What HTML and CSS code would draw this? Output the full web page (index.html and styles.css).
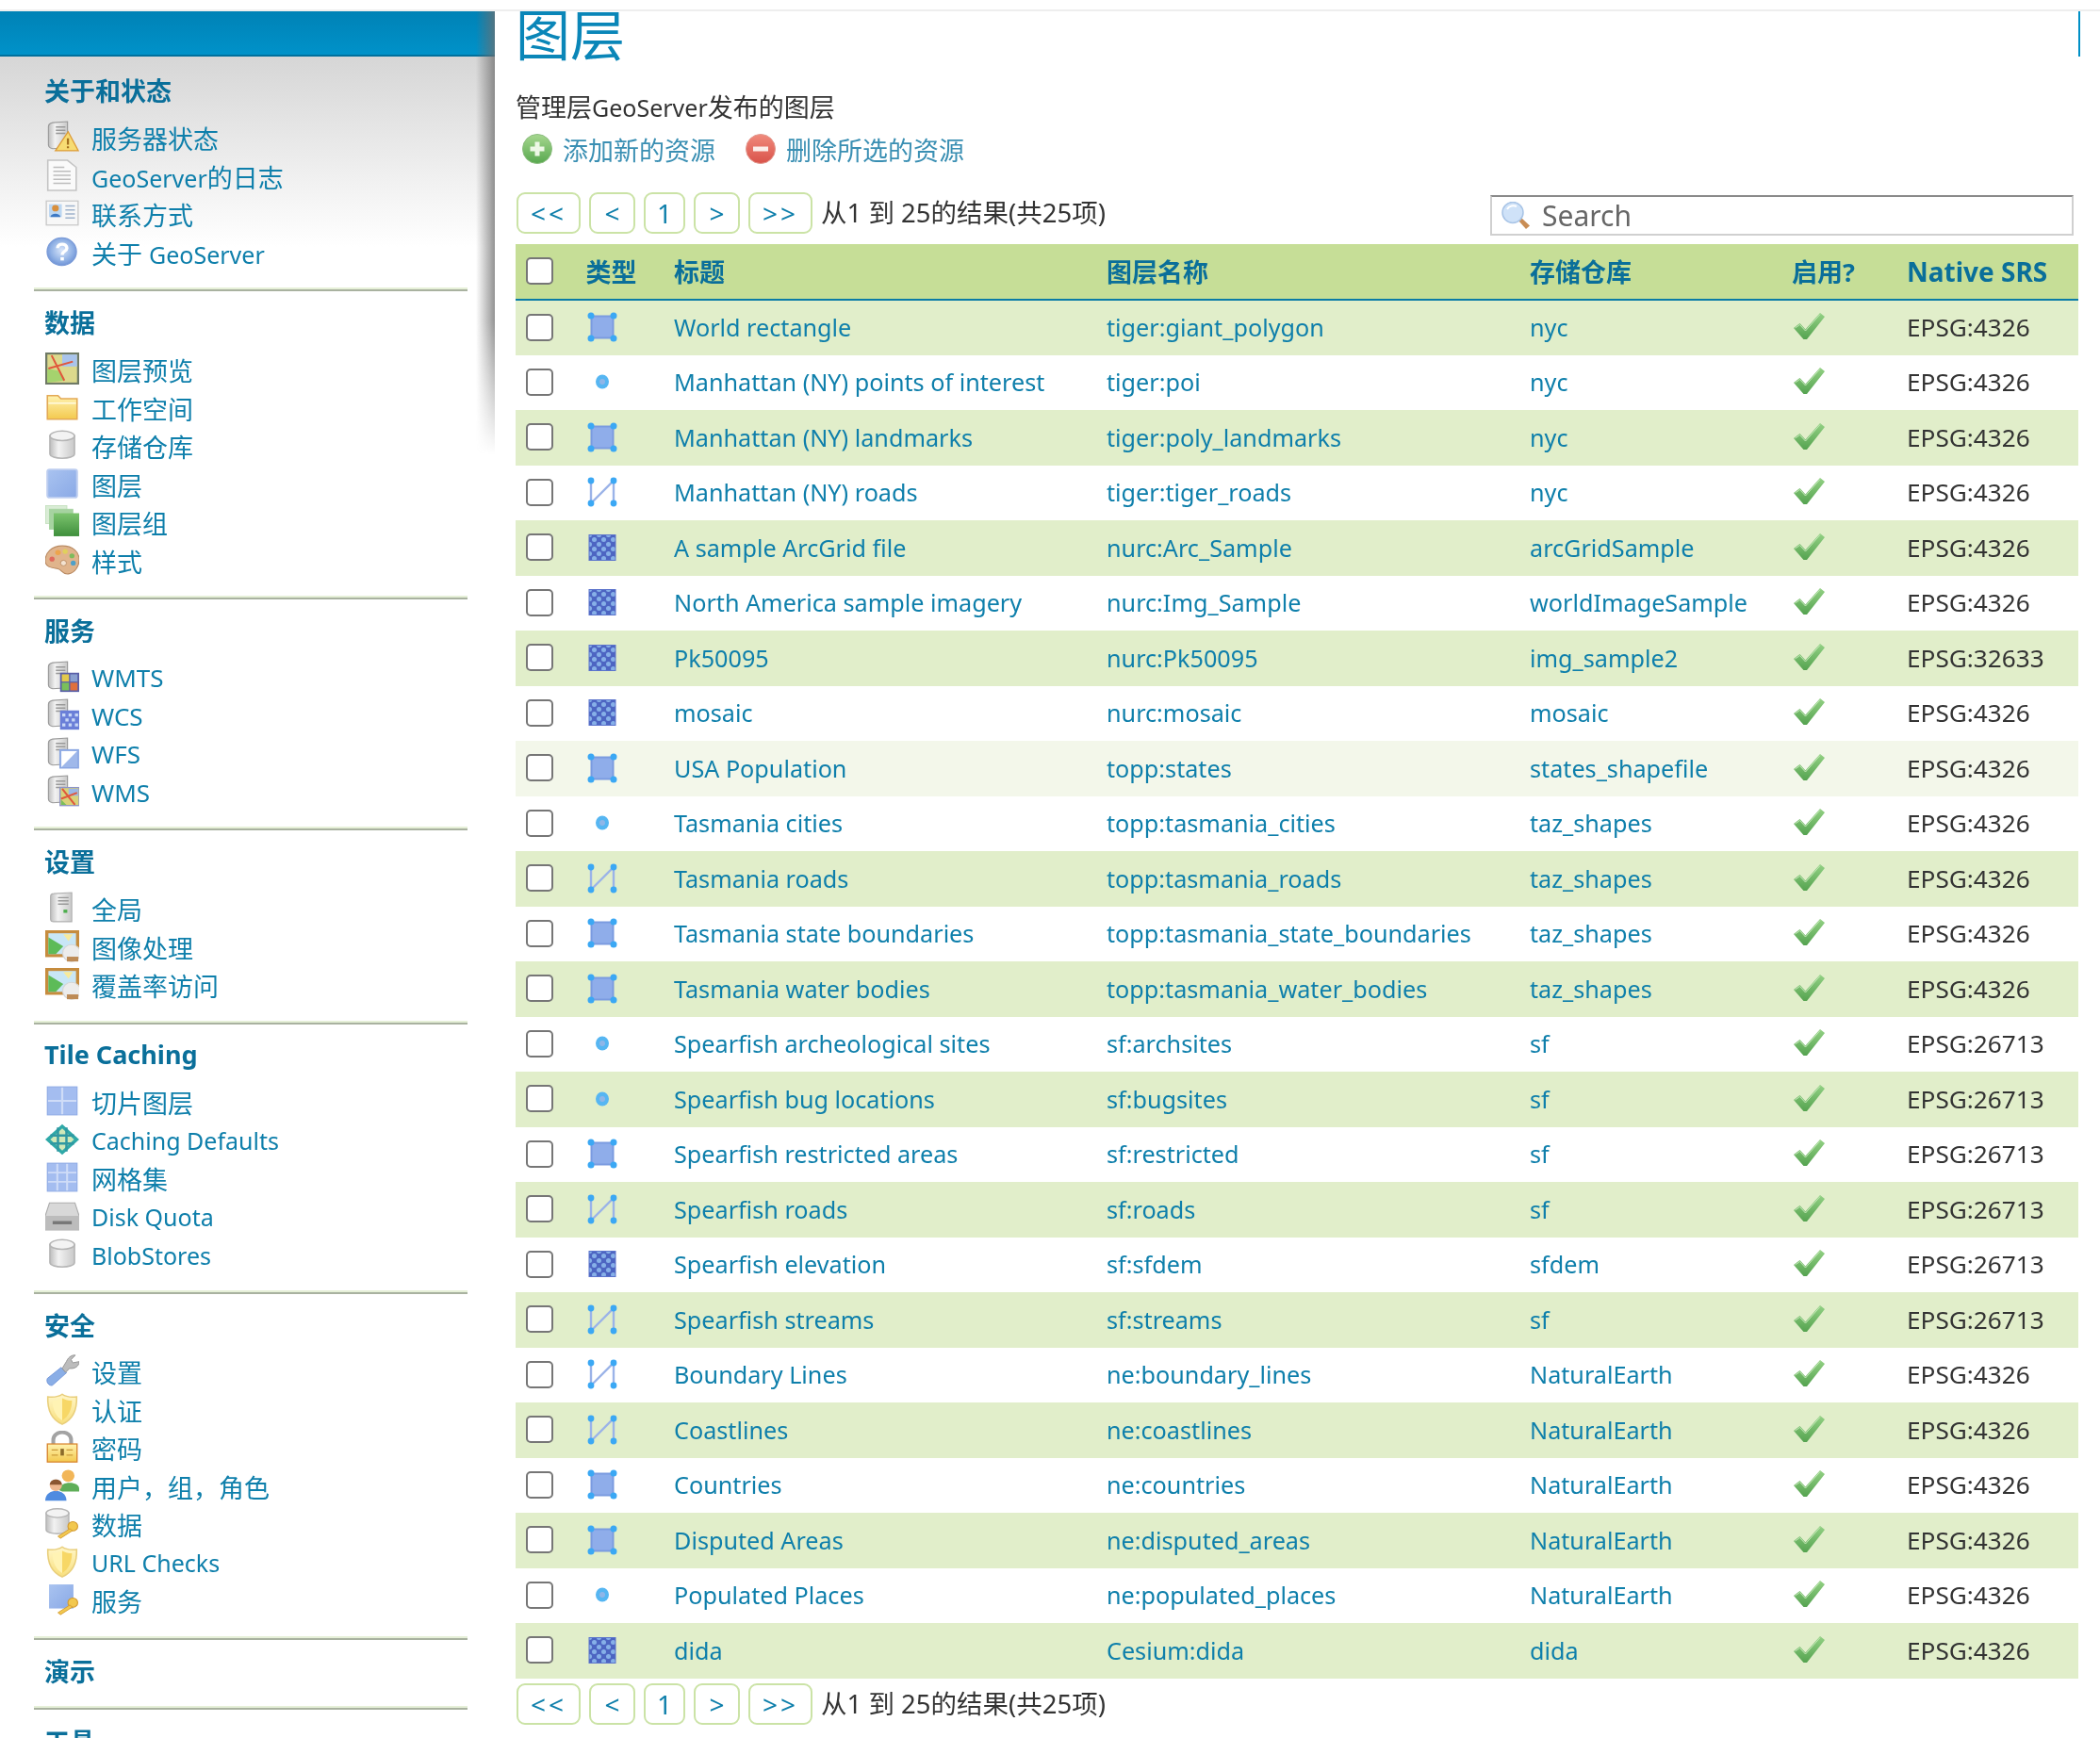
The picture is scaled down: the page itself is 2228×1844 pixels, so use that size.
FILE: index.html
```html
<!DOCTYPE html>
<html lang="zh">
<head>
<meta charset="utf-8">
<title>图层</title>
<link rel="stylesheet" href="styles.css">
</head>
<body>
<svg class="sprites" aria-hidden="true">
<defs>
<linearGradient id="gGray" x1="0" x2="1" y1="0" y2="0"><stop offset="0" stop-color="#bdbdbd"/><stop offset=".35" stop-color="#f2f2f2"/><stop offset="1" stop-color="#c9c9c9"/></linearGradient>
<linearGradient id="gGold" x1="0" x2="0" y1="0" y2="1"><stop offset="0" stop-color="#fff3b0"/><stop offset="1" stop-color="#f3c94e"/></linearGradient>
<linearGradient id="gShield" x1="0" x2="0" y1="0" y2="1"><stop offset="0" stop-color="#fff6c8"/><stop offset="1" stop-color="#f8df7c"/></linearGradient>
<linearGradient id="gBlue" x1="0" x2="1" y1="0" y2="1"><stop offset="0" stop-color="#a9c3f0"/><stop offset="1" stop-color="#8aa9e6"/></linearGradient>
<linearGradient id="gGreen" x1="0" x2="0" y1="0" y2="1"><stop offset="0" stop-color="#7cc46e"/><stop offset="1" stop-color="#3f8f3c"/></linearGradient>
<linearGradient id="gCheck" x1="0" x2="0" y1="0" y2="1"><stop offset="0" stop-color="#93d184"/><stop offset="1" stop-color="#55a350"/></linearGradient>
<linearGradient id="gRed" x1="0" x2="0" y1="0" y2="1"><stop offset="0" stop-color="#f08a7c"/><stop offset="1" stop-color="#d9534a"/></linearGradient>
<linearGradient id="gPlus" x1="0" x2="0" y1="0" y2="1"><stop offset="0" stop-color="#a6d78f"/><stop offset="1" stop-color="#58a84f"/></linearGradient>
<radialGradient id="gOrb" cx=".5" cy=".45" r=".55"><stop offset="0" stop-color="#d9e6fa"/><stop offset=".7" stop-color="#8fb0e4"/><stop offset="1" stop-color="#6f93d6"/></radialGradient>
<pattern id="pCheck" width="10" height="10" patternUnits="userSpaceOnUse"><rect width="10" height="10" fill="#4d65c2"/><circle cx="2.5" cy="2.5" r="2.5" fill="#86b0e8"/><circle cx="7.5" cy="7.5" r="2.5" fill="#86b0e8"/></pattern>
<g id="srv"><path d="M1.5 3Q1.5 1.4 3.5 1L10.5.5V13.5L3.5 14Q1.5 13.6 1.5 12Z" fill="url(#gGray)" stroke="#9a9a9a" stroke-width=".5"/><path d="M5 3.2H9.5M5 4.8H9.5M5 6.4H9.5" stroke="#999" stroke-width=".7"/></g>
<g id="cyl"><path d="M2.2 3.5V12.5C2.2 15.4 13.8 15.4 13.8 12.5V3.5Z" fill="url(#gGray)" stroke="#b5b5b5" stroke-width=".7"/><ellipse cx="8" cy="3.5" rx="5.8" ry="2.4" fill="#f3f3f3" stroke="#b5b5b5" stroke-width=".7"/></g>
<g id="key"><circle cx="13" cy="9.6" r="2.3" fill="#f2c84f" stroke="#d49a2e" stroke-width=".5"/><path d="M11.6 10.8L6 14.6L7.2 15.6L12.8 11.8Z" fill="#f2c84f" stroke="#d49a2e" stroke-width=".4"/></g>
<g id="shd"><path d="M8 .6C6.5 1.8 4 2.2 1.2 1.9C1 7.5 2.4 13 8 15.6C13.6 13 15 7.5 14.8 1.9C12 2.2 9.5 1.8 8 .6Z" fill="url(#gShield)" stroke="#e9cf7c" stroke-width=".7"/><path d="M8 2.6V13.6C11 12 12.6 8 12.6 3.8C11 3.8 9.3 3.4 8 2.6Z" fill="#f7d766"/><path d="M8 2.6C6.7 3.4 5 3.8 3.4 3.8C3.4 8 5 12 8 13.6Z" fill="#fff3b4"/></g>
<g id="frame"><rect x="0" y="0" width="16" height="13.4" fill="#c68c3e"/><rect x="1.5" y="1.5" width="13" height="10.4" fill="#c8e6f6"/><path d="M1.5 3.5L8.5 8L5 11.9H1.5Z" fill="#5dbb58"/><path d="M8.5 2H13L11 5.4Z" fill="#f7ea9c"/><circle cx="12.4" cy="11.4" r="4.2" fill="#ececec" stroke="#d5d5d5" stroke-width=".5"/><path d="M10.2 13.2H15.6V15.6H10.2Z" fill="#bd8b56"/></g>
<symbol id="i-status" viewBox="0 0 16 16" preserveAspectRatio="none"><use href="#srv"/><path d="M10.8 5.5L15.6 15H4.8Z" fill="#f7dc73" stroke="#dd9c38" stroke-width=".6"/><path d="M10.2 8.8H11.2V12H10.2ZM10.2 12.8H11.2V13.8H10.2Z" fill="#a4701e"/></symbol>
<symbol id="i-log" viewBox="0 0 16 16" preserveAspectRatio="none"><path d="M1.2.5H10.5L14.6 4V15.5H1.2Z" fill="#fafafa" stroke="#c4c4c4" stroke-width=".7"/><path d="M3.8 6H12M3.8 8H12M3.8 10H12M3.8 12H12M3.8 4H9" stroke="#bdbdbd" stroke-width=".6"/></symbol>
<symbol id="i-card" viewBox="0 0 16 16" preserveAspectRatio="none"><rect x=".5" y="2" width="15" height="12" fill="#f7f7f7" stroke="#c9c9c9" stroke-width=".6"/><rect x="1.8" y="3.6" width="6" height="6.4" fill="#bcd7f2"/><circle cx="4.8" cy="5.6" r="1.6" fill="#d98f3c"/><path d="M2.4 10C2.6 7.8 7 7.8 7.2 10Z" fill="#3d79c4"/><path d="M9.5 4.5H14M9.5 6.5H14M9.5 8.5H14M9.5 10.5H14" stroke="#9fb3cc" stroke-width=".7"/></symbol>
<symbol id="i-about" viewBox="0 0 16 16" preserveAspectRatio="none"><circle cx="7.8" cy="8" r="6.9" fill="url(#gOrb)" stroke="#7a9bd8" stroke-width=".6"/><path d="M5.8 6.2C5.8 3.6 10.2 3.6 10.2 6.2C10.2 7.8 8 7.8 8 9.6" fill="none" stroke="#fff" stroke-width="1.5"/><rect x="7.2" y="10.8" width="1.6" height="1.6" fill="#fff"/></symbol>
<symbol id="i-preview" viewBox="0 0 16 16" preserveAspectRatio="none"><rect x=".5" y=".5" width="15" height="15" fill="#dcd98c" stroke="#6f7a66"/><rect x="8" y="1" width="7" height="6" fill="#a9c4ec"/><path d="M1 8L6 9L9 14L1 15Z" fill="#a5d36e"/><path d="M3 1.5L9 14M1.5 8L13 4.5" stroke="#e0573c" stroke-width=".9"/></symbol>
<symbol id="i-folder" viewBox="0 0 16 16" preserveAspectRatio="none"><path d="M1 2.2H6L7.4 3.8H15V14H1Z" fill="url(#gGold)" stroke="#e3a955" stroke-width=".7"/><path d="M1.5 6H14.5" stroke="#fff9dc" stroke-width=".8"/></symbol>
<symbol id="i-db" viewBox="0 0 16 16" preserveAspectRatio="none"><use href="#cyl"/></symbol>
<symbol id="i-layer" viewBox="0 0 16 16" preserveAspectRatio="none"><rect x="1" y="1" width="14" height="14" rx="1" fill="url(#gBlue)" stroke="#bccdf0" stroke-width=".9"/></symbol>
<symbol id="i-group" viewBox="0 0 16 16" preserveAspectRatio="none"><rect x=".2" y=".2" width="10" height="9" fill="#d9ecd5" stroke="#c3e0be" stroke-width=".4"/><rect x="2" y="2" width="11" height="10" fill="#a6d3a0" stroke="#a6d3a0" stroke-width=".4"/><rect x="4" y="4" width="12" height="11.5" fill="url(#gGreen)"/></symbol>
<symbol id="i-style" viewBox="0 0 16 16" preserveAspectRatio="none"><path d="M8 1C3 1 0 4.5 0 8.5C0 12 4 12 6 12.5C8 13 8 15.5 11 15C14 14.5 16 11 16 8C16 4 13 1 8 1Z" fill="#e0b48c" stroke="#b98a62" stroke-width=".5"/><circle cx="3.2" cy="7.6" r="1.2" fill="#e06a5c"/><circle cx="6" cy="4.4" r="1.3" fill="#eda44c"/><circle cx="9.4" cy="3.8" r="1.2" fill="#e0d05c"/><circle cx="12.6" cy="6" r="1.2" fill="#7dbb5c"/><circle cx="13.2" cy="9.6" r="1.2" fill="#4fa0c8"/><circle cx="8.6" cy="9.6" r="1.4" fill="#f3e2d0" stroke="#b98a62" stroke-width=".4"/></symbol>
<symbol id="i-wmts" viewBox="0 0 16 16" preserveAspectRatio="none"><use href="#srv"/><rect x="7" y="6" width="9" height="9.6" fill="#5a5fa8"/><rect x="7.8" y="6.8" width="3.4" height="3.6" fill="#e3c94c"/><rect x="11.8" y="6.8" width="3.4" height="3.6" fill="#8aa0d0"/><rect x="7.8" y="11" width="3.4" height="3.8" fill="#7abf5a"/><rect x="11.8" y="11" width="3.4" height="3.8" fill="#e0703c"/></symbol>
<symbol id="i-wcs" viewBox="0 0 16 16" preserveAspectRatio="none"><use href="#srv"/><rect x="7" y="6" width="9" height="9.6" fill="#6a7fd8"/><path d="M8 7.5H9.5V9H8ZM11 7.5H12.5V9H11ZM14 7.5H15.5V9H14ZM9.5 10H11V11.5H9.5ZM12.5 10H14V11.5H12.5ZM8 12.5H9.5V14H8ZM11 12.5H12.5V14H11ZM14 12.5H15.5V14H14Z" fill="#c8d8f6"/></symbol>
<symbol id="i-wfs" viewBox="0 0 16 16" preserveAspectRatio="none"><use href="#srv"/><rect x="7" y="6.4" width="8.6" height="9" fill="#9fb8ea" stroke="#8aa6e2" stroke-width=".7"/><path d="M7.6 7H15L7.6 15Z" fill="#fff"/></symbol>
<symbol id="i-wms" viewBox="0 0 16 16" preserveAspectRatio="none"><use href="#srv"/><rect x="7" y="6.4" width="9" height="9" fill="#d8d27a" stroke="#8d94c8" stroke-width=".6"/><rect x="11" y="7" width="4.5" height="3.5" fill="#9bb7e6"/><path d="M8 7L14 15M7.5 12L15 9" stroke="#e0573c" stroke-width=".9"/><path d="M7.5 12.5L10 15H7.5Z" fill="#7abf5a"/></symbol>
<symbol id="i-global" viewBox="0 0 16 16" preserveAspectRatio="none"><path d="M2.5 2.5Q2.5 1 4 1L12.5.5V15L4 15Q2.5 15 2.5 13.6Z" fill="url(#gGray)" stroke="#b0b0b0" stroke-width=".5"/><path d="M6 3H11M6 4.6H11M6 6.2H11" stroke="#9a9a9a" stroke-width=".7"/><rect x="8.6" y="9" width="1.8" height="1.6" fill="#4cae4c"/></symbol>
<symbol id="i-frame" viewBox="0 0 16 16" preserveAspectRatio="none"><use href="#frame"/></symbol>
<symbol id="i-tile" viewBox="0 0 16 16" preserveAspectRatio="none"><rect x="1" y="1" width="14" height="14" fill="#a4bdf0"/><path d="M8 1V15M1 8H15" stroke="#cfdcf7" stroke-width="1"/><rect x="1" y="1" width="14" height="14" fill="none" stroke="#8fabe6" stroke-width=".5"/></symbol>
<symbol id="i-grid" viewBox="0 0 16 16" preserveAspectRatio="none"><rect x="1" y="1" width="14" height="14" fill="#a4bdf0"/><path d="M5.7 1V15M10.3 1V15M1 5.7H15M1 10.3H15" stroke="#cfdcf7" stroke-width=".9"/><rect x="1" y="1" width="14" height="14" fill="none" stroke="#8fabe6" stroke-width=".5"/></symbol>
<symbol id="i-cache" viewBox="0 0 16 16" preserveAspectRatio="none"><path d="M8 .3L16 8L8 15.7L0 8Z" fill="#2fa9a8"/><path d="M8 2.5L13.6 8L8 13.5L2.4 8Z" fill="#cfe8b8"/><path d="M6 2V14M10 2V14M2.4 6H13.6M2.4 10H13.6" stroke="#2f98a2" stroke-width="1.1"/></symbol>
<symbol id="i-disk" viewBox="0 0 16 16" preserveAspectRatio="none"><path d="M2 1.5H14L16 8V15H0V8Z" fill="#d8d8d8" stroke="#ababab" stroke-width=".5"/><rect x="0" y="8" width="16" height="7" fill="#bcbcbc"/><rect x="3.5" y="10.6" width="9" height="1.6" fill="#777"/></symbol>
<symbol id="i-wrench" viewBox="0 0 16 16" preserveAspectRatio="none"><path d="M1 12L7.5 6.5L10 9.2L3.4 15.4C2 16 .2 14 1 12Z" fill="#8aaee6" stroke="#6f94d8" stroke-width=".4"/><path d="M8 7L10 3.5C11 1 13 .2 14.2.4L12.2 2.6L13 4.2L16 3.6C16 5.8 14 7.4 11.4 7L9.6 9Z" fill="#bcbcbc" stroke="#8e8e8e" stroke-width=".4"/></symbol>
<symbol id="i-shield" viewBox="0 0 16 16" preserveAspectRatio="none"><use href="#shd"/></symbol>
<symbol id="i-lock" viewBox="0 0 16 16" preserveAspectRatio="none"><path d="M3.8 8V4.6C3.8-.5 12.2-.5 12.2 4.6V8" fill="none" stroke="#a3a3a3" stroke-width="1.8"/><rect x="1" y="6.6" width="14" height="9" fill="url(#gGold)" stroke="#d9862f" stroke-width=".6"/><path d="M3 9.6H6M3 12.2H6M10 9.6H13M10 12.2H13" stroke="#cc9a3a" stroke-width=".6"/><rect x="7.2" y="9" width="1.6" height="3.4" fill="#8a6a2a"/></symbol>
<symbol id="i-users" viewBox="0 0 16 16" preserveAspectRatio="none"><path d="M6.5 10.4C6.5 5.6 16 5.6 16 9.6V11H8Z" fill="#5fae58"/><circle cx="10.8" cy="3.2" r="3" fill="#f2b658"/><path d="M0 15.6C0 9 10 9 10 15.6Z" fill="#4f8be0"/><circle cx="5" cy="8" r="2.9" fill="#eeb88f"/><path d="M2.1 7.6C2.4 4.2 7.6 4.2 7.9 7.6Z" fill="#8a5630"/></symbol>
<symbol id="i-dbkey" viewBox="0 0 16 16" preserveAspectRatio="none"><g transform="translate(-1.6 -.2) scale(.92)"><use href="#cyl"/></g><use href="#key"/></symbol>
<symbol id="i-svckey" viewBox="0 0 16 16" preserveAspectRatio="none"><rect x="1.8" y=".5" width="11.5" height="12" fill="url(#gBlue)"/><use href="#key"/></symbol>
<symbol id="f-poly" viewBox="0 0 32 32"><rect x="4.5" y="4.5" width="23" height="23" fill="#8fadea" stroke="#7b9be0" stroke-width="2"/><g fill="#3ba8f4"><circle cx="4" cy="4" r="3.5"/><circle cx="28" cy="4" r="3.5"/><circle cx="4" cy="28" r="3.5"/><circle cx="28" cy="28" r="3.5"/></g></symbol>
<symbol id="f-line" viewBox="0 0 32 32"><path d="M4 28V4M4 28L28 4V28" fill="none" stroke="#9bb3e8" stroke-width="2.4"/><g fill="#3ba8f4"><circle cx="4" cy="4" r="3.4"/><circle cx="28" cy="4" r="3.4"/><circle cx="4" cy="28" r="3.4"/><circle cx="28" cy="28" r="3.4"/></g></symbol>
<symbol id="f-point" viewBox="0 0 32 32"><ellipse cx="16" cy="16" rx="7" ry="7.6" fill="#56b6f2"/><circle cx="16" cy="16" r="3" fill="#8fb6e8"/></symbol>
<symbol id="f-raster" viewBox="0 0 32 32"><rect x="2" y="2.5" width="28" height="27" fill="url(#pCheck)" stroke="#5c74cc" stroke-width="1"/></symbol>
<symbol id="c-ok" viewBox="0 0 33 28"><path d="M0 16L6.5 11L12.5 17.5L28 0L33 4L14 28H10.5Z" fill="url(#gCheck)"/><path d="M1.5 16L6.5 12.5L12.5 19L28 1.5" fill="none" stroke="#c4e8b8" stroke-width="1"/></symbol>
<symbol id="a-add" viewBox="0 0 32 32"><circle cx="16" cy="16" r="15.5" fill="url(#gPlus)" stroke="#8dbd80" stroke-width="1"/><path d="M16 8.5V23.5M8.5 16H23.5" stroke="#eef8e6" stroke-width="5"/></symbol>
<symbol id="a-del" viewBox="0 0 32 32"><circle cx="16" cy="16" r="15.5" fill="url(#gRed)" stroke="#e29a90" stroke-width="1"/><path d="M8 16H24" stroke="#fbeeea" stroke-width="5"/></symbol>
<symbol id="a-search" viewBox="0 0 31 30"><path d="M18 20L26 29L30 25.5L21 17Z" fill="#c98d54"/><ellipse cx="12" cy="11.5" rx="11" ry="11" fill="#cfe2f8" stroke="#a8c4e6" stroke-width="1.5"/><path d="M6 8C8 4 13 3.5 16 5" fill="none" stroke="#fff" stroke-width="2"/></symbol>
</defs>
</svg>
<div class="topline"></div>
<div class="page">
<nav class="sidebar">
<div class="sidebar-head"></div>
<section class="sec sec-first"><h3>关于和状态</h3>
<ul>
<li><svg class="ic"><use href="#i-status"/></svg><a>服务器状态</a></li>
<li><svg class="ic"><use href="#i-log"/></svg><a><span class="lat">GeoServer</span>的日志</a></li>
<li><svg class="ic"><use href="#i-card"/></svg><a>联系方式</a></li>
<li><svg class="ic"><use href="#i-about"/></svg><a>关于 <span class="lat">GeoServer</span></a></li>
</ul></section>
<section class="sec"><h3>数据</h3>
<ul>
<li><svg class="ic"><use href="#i-preview"/></svg><a>图层预览</a></li>
<li><svg class="ic"><use href="#i-folder"/></svg><a>工作空间</a></li>
<li><svg class="ic"><use href="#i-db"/></svg><a>存储仓库</a></li>
<li><svg class="ic"><use href="#i-layer"/></svg><a>图层</a></li>
<li><svg class="ic"><use href="#i-group"/></svg><a>图层组</a></li>
<li><svg class="ic"><use href="#i-style"/></svg><a>样式</a></li>
</ul></section>
<section class="sec"><h3>服务</h3>
<ul>
<li><svg class="ic"><use href="#i-wmts"/></svg><a class="caps">WMTS</a></li>
<li><svg class="ic"><use href="#i-wcs"/></svg><a class="caps">WCS</a></li>
<li><svg class="ic"><use href="#i-wfs"/></svg><a class="caps">WFS</a></li>
<li><svg class="ic"><use href="#i-wms"/></svg><a class="caps">WMS</a></li>
</ul></section>
<section class="sec"><h3>设置</h3>
<ul>
<li><svg class="ic"><use href="#i-global"/></svg><a>全局</a></li>
<li><svg class="ic"><use href="#i-frame"/></svg><a>图像处理</a></li>
<li><svg class="ic"><use href="#i-frame"/></svg><a>覆盖率访问</a></li>
</ul></section>
<section class="sec"><h3 class="h-lat">Tile Caching</h3>
<ul>
<li><svg class="ic"><use href="#i-tile"/></svg><a>切片图层</a></li>
<li><svg class="ic"><use href="#i-cache"/></svg><a class="lat">Caching Defaults</a></li>
<li><svg class="ic"><use href="#i-grid"/></svg><a>网格集</a></li>
<li><svg class="ic"><use href="#i-disk"/></svg><a class="lat">Disk Quota</a></li>
<li><svg class="ic"><use href="#i-db"/></svg><a class="lat">BlobStores</a></li>
</ul></section>
<section class="sec"><h3>安全</h3>
<ul>
<li><svg class="ic"><use href="#i-wrench"/></svg><a>设置</a></li>
<li><svg class="ic"><use href="#i-shield"/></svg><a>认证</a></li>
<li><svg class="ic"><use href="#i-lock"/></svg><a>密码</a></li>
<li><svg class="ic"><use href="#i-users"/></svg><a>用户，组，角色</a></li>
<li><svg class="ic"><use href="#i-dbkey"/></svg><a>数据</a></li>
<li><svg class="ic"><use href="#i-shield"/></svg><a class="lat">URL Checks</a></li>
<li><svg class="ic"><use href="#i-svckey"/></svg><a>服务</a></li>
</ul></section>
<section class="sec"><h3>演示</h3></section>
<section class="sec"><h3>工具</h3></section>
</nav>
<main class="main">
<h1>图层</h1>
<p class="desc">管理层<span class="lat">GeoServer</span>发布的图层</p>
<div class="actions">
<a class="act"><svg class="act-ic"><use href="#a-add"/></svg>添加新的资源</a>
<a class="act"><svg class="act-ic"><use href="#a-del"/></svg>删除所选的资源</a>
</div>
<div class="toolbar">
<div class="pager">
<a class="pg pg-wide">&lt;&lt;</a><a class="pg pg-mid">&lt;</a><a class="pg pg-num">1</a><a class="pg pg-mid">&gt;</a><a class="pg pg-wide">&gt;&gt;</a>
<span class="count">从1 到 25的结果(共25项)</span>
</div>
<div class="search"><svg class="search-ic"><use href="#a-search"/></svg><span>Search</span></div>
</div>
<table class="grid">
<colgroup><col class="c1"><col class="c2"><col class="c3"><col class="c4"><col class="c5"><col class="c6"><col class="c7"></colgroup>
<thead><tr><th><span class="cb"></span></th><th>类型</th><th>标题</th><th>图层名称</th><th>存储仓库</th><th>启用?</th><th class="srs-head">Native SRS</th></tr></thead>
<tbody>
<tr class="odd"><td><span class="cb"></span></td><td><svg class="ft"><use href="#f-poly"/></svg></td><td><a>World rectangle</a></td><td><a>tiger:giant_polygon</a></td><td><a>nyc</a></td><td><svg class="ok"><use href="#c-ok"/></svg></td><td class="srs">EPSG:4326</td></tr>
<tr><td><span class="cb"></span></td><td><svg class="ft"><use href="#f-point"/></svg></td><td><a>Manhattan (NY) points of interest</a></td><td><a>tiger:poi</a></td><td><a>nyc</a></td><td><svg class="ok"><use href="#c-ok"/></svg></td><td class="srs">EPSG:4326</td></tr>
<tr class="odd"><td><span class="cb"></span></td><td><svg class="ft"><use href="#f-poly"/></svg></td><td><a>Manhattan (NY) landmarks</a></td><td><a>tiger:poly_landmarks</a></td><td><a>nyc</a></td><td><svg class="ok"><use href="#c-ok"/></svg></td><td class="srs">EPSG:4326</td></tr>
<tr><td><span class="cb"></span></td><td><svg class="ft"><use href="#f-line"/></svg></td><td><a>Manhattan (NY) roads</a></td><td><a>tiger:tiger_roads</a></td><td><a>nyc</a></td><td><svg class="ok"><use href="#c-ok"/></svg></td><td class="srs">EPSG:4326</td></tr>
<tr class="odd"><td><span class="cb"></span></td><td><svg class="ft"><use href="#f-raster"/></svg></td><td><a>A sample ArcGrid file</a></td><td><a>nurc:Arc_Sample</a></td><td><a>arcGridSample</a></td><td><svg class="ok"><use href="#c-ok"/></svg></td><td class="srs">EPSG:4326</td></tr>
<tr><td><span class="cb"></span></td><td><svg class="ft"><use href="#f-raster"/></svg></td><td><a>North America sample imagery</a></td><td><a>nurc:Img_Sample</a></td><td><a>worldImageSample</a></td><td><svg class="ok"><use href="#c-ok"/></svg></td><td class="srs">EPSG:4326</td></tr>
<tr class="odd"><td><span class="cb"></span></td><td><svg class="ft"><use href="#f-raster"/></svg></td><td><a>Pk50095</a></td><td><a>nurc:Pk50095</a></td><td><a>img_sample2</a></td><td><svg class="ok"><use href="#c-ok"/></svg></td><td class="srs">EPSG:32633</td></tr>
<tr><td><span class="cb"></span></td><td><svg class="ft"><use href="#f-raster"/></svg></td><td><a>mosaic</a></td><td><a>nurc:mosaic</a></td><td><a>mosaic</a></td><td><svg class="ok"><use href="#c-ok"/></svg></td><td class="srs">EPSG:4326</td></tr>
<tr class="hl"><td><span class="cb"></span></td><td><svg class="ft"><use href="#f-poly"/></svg></td><td><a>USA Population</a></td><td><a>topp:states</a></td><td><a>states_shapefile</a></td><td><svg class="ok"><use href="#c-ok"/></svg></td><td class="srs">EPSG:4326</td></tr>
<tr><td><span class="cb"></span></td><td><svg class="ft"><use href="#f-point"/></svg></td><td><a>Tasmania cities</a></td><td><a>topp:tasmania_cities</a></td><td><a>taz_shapes</a></td><td><svg class="ok"><use href="#c-ok"/></svg></td><td class="srs">EPSG:4326</td></tr>
<tr class="odd"><td><span class="cb"></span></td><td><svg class="ft"><use href="#f-line"/></svg></td><td><a>Tasmania roads</a></td><td><a>topp:tasmania_roads</a></td><td><a>taz_shapes</a></td><td><svg class="ok"><use href="#c-ok"/></svg></td><td class="srs">EPSG:4326</td></tr>
<tr><td><span class="cb"></span></td><td><svg class="ft"><use href="#f-poly"/></svg></td><td><a>Tasmania state boundaries</a></td><td><a>topp:tasmania_state_boundaries</a></td><td><a>taz_shapes</a></td><td><svg class="ok"><use href="#c-ok"/></svg></td><td class="srs">EPSG:4326</td></tr>
<tr class="odd"><td><span class="cb"></span></td><td><svg class="ft"><use href="#f-poly"/></svg></td><td><a>Tasmania water bodies</a></td><td><a>topp:tasmania_water_bodies</a></td><td><a>taz_shapes</a></td><td><svg class="ok"><use href="#c-ok"/></svg></td><td class="srs">EPSG:4326</td></tr>
<tr><td><span class="cb"></span></td><td><svg class="ft"><use href="#f-point"/></svg></td><td><a>Spearfish archeological sites</a></td><td><a>sf:archsites</a></td><td><a>sf</a></td><td><svg class="ok"><use href="#c-ok"/></svg></td><td class="srs">EPSG:26713</td></tr>
<tr class="odd"><td><span class="cb"></span></td><td><svg class="ft"><use href="#f-point"/></svg></td><td><a>Spearfish bug locations</a></td><td><a>sf:bugsites</a></td><td><a>sf</a></td><td><svg class="ok"><use href="#c-ok"/></svg></td><td class="srs">EPSG:26713</td></tr>
<tr><td><span class="cb"></span></td><td><svg class="ft"><use href="#f-poly"/></svg></td><td><a>Spearfish restricted areas</a></td><td><a>sf:restricted</a></td><td><a>sf</a></td><td><svg class="ok"><use href="#c-ok"/></svg></td><td class="srs">EPSG:26713</td></tr>
<tr class="odd"><td><span class="cb"></span></td><td><svg class="ft"><use href="#f-line"/></svg></td><td><a>Spearfish roads</a></td><td><a>sf:roads</a></td><td><a>sf</a></td><td><svg class="ok"><use href="#c-ok"/></svg></td><td class="srs">EPSG:26713</td></tr>
<tr><td><span class="cb"></span></td><td><svg class="ft"><use href="#f-raster"/></svg></td><td><a>Spearfish elevation</a></td><td><a>sf:sfdem</a></td><td><a>sfdem</a></td><td><svg class="ok"><use href="#c-ok"/></svg></td><td class="srs">EPSG:26713</td></tr>
<tr class="odd"><td><span class="cb"></span></td><td><svg class="ft"><use href="#f-line"/></svg></td><td><a>Spearfish streams</a></td><td><a>sf:streams</a></td><td><a>sf</a></td><td><svg class="ok"><use href="#c-ok"/></svg></td><td class="srs">EPSG:26713</td></tr>
<tr><td><span class="cb"></span></td><td><svg class="ft"><use href="#f-line"/></svg></td><td><a>Boundary Lines</a></td><td><a>ne:boundary_lines</a></td><td><a>NaturalEarth</a></td><td><svg class="ok"><use href="#c-ok"/></svg></td><td class="srs">EPSG:4326</td></tr>
<tr class="odd"><td><span class="cb"></span></td><td><svg class="ft"><use href="#f-line"/></svg></td><td><a>Coastlines</a></td><td><a>ne:coastlines</a></td><td><a>NaturalEarth</a></td><td><svg class="ok"><use href="#c-ok"/></svg></td><td class="srs">EPSG:4326</td></tr>
<tr><td><span class="cb"></span></td><td><svg class="ft"><use href="#f-poly"/></svg></td><td><a>Countries</a></td><td><a>ne:countries</a></td><td><a>NaturalEarth</a></td><td><svg class="ok"><use href="#c-ok"/></svg></td><td class="srs">EPSG:4326</td></tr>
<tr class="odd"><td><span class="cb"></span></td><td><svg class="ft"><use href="#f-poly"/></svg></td><td><a>Disputed Areas</a></td><td><a>ne:disputed_areas</a></td><td><a>NaturalEarth</a></td><td><svg class="ok"><use href="#c-ok"/></svg></td><td class="srs">EPSG:4326</td></tr>
<tr><td><span class="cb"></span></td><td><svg class="ft"><use href="#f-point"/></svg></td><td><a>Populated Places</a></td><td><a>ne:populated_places</a></td><td><a>NaturalEarth</a></td><td><svg class="ok"><use href="#c-ok"/></svg></td><td class="srs">EPSG:4326</td></tr>
<tr class="odd"><td><span class="cb"></span></td><td><svg class="ft"><use href="#f-raster"/></svg></td><td><a>dida</a></td><td><a>Cesium:dida</a></td><td><a>dida</a></td><td><svg class="ok"><use href="#c-ok"/></svg></td><td class="srs">EPSG:4326</td></tr>
</tbody>
</table>
<div class="pager pager-bottom">
<a class="pg pg-wide">&lt;&lt;</a><a class="pg pg-mid">&lt;</a><a class="pg pg-num">1</a><a class="pg pg-mid">&gt;</a><a class="pg pg-wide">&gt;&gt;</a>
<span class="count">从1 到 25的结果(共25项)</span>
</div>
</main>
</div>
</body>
</html>
```
FILE: styles.css
```css
* { box-sizing: border-box; }
html, body { margin: 0; height: 1844px; overflow: hidden; background: #fff; }
body {
  font-family: "Noto Sans", "Noto Sans CJK SC", sans-serif;
  font-size: 25px;
  color: #333;
  filter: blur(0.5px);
}
a { color: #0e7fab; text-decoration: none; }
.sprites { position: absolute; width: 0; height: 0; }

.topline { height: 12px; border-bottom: 2px solid #eee; }
.page { display: flex; align-items: flex-start; }

/* sidebar */
.sidebar { position: relative; width: 525px; flex: none; background: linear-gradient(#d6d6d6 48px, #fff 250px); }
.sidebar::after {
  content: "";
  position: absolute;
  top: 0; right: 0;
  width: 20px; height: 470px;
  background: linear-gradient(to right, rgba(110,110,110,0), rgba(110,110,110,.75));
  -webkit-mask-image: linear-gradient(#000 70%, transparent);
  mask-image: linear-gradient(#000 70%, transparent);
}
.sidebar-head { height: 48px; background: linear-gradient(#0082b6, #0092c9); border-bottom: 2px solid #00709c; }
.sec { margin-left: 36px; width: 460px; padding: 14px 0 18.6px 11px; border-bottom: 2px solid #a9b2a0; box-shadow: inset 0 -2px 0 #e6f0d8; }
.sec-first { padding-top: 16.5px; }
.sec h3 { margin: 0; height: 40px; line-height: 40px; font-size: 27px; font-weight: 700; color: #0a6f9a; }
.sec h3.h-lat { line-height: 36px; }
.sec ul { margin: 9px 0 0; padding: 0 0 0 1px; list-style: none; }
.sec-first ul { margin-top: 10.2px; }
.sec li { display: flex; align-items: center; gap: 13px; height: 40.5px; }
.sec li a { font-size: 27px; }
.sec li a.lat, .lat { font-size: 25px; }
.sec li a.caps { font-size: 26px; }
.ic { width: 36px; height: 34px; flex: none; margin-top: -3px; filter: blur(0.5px); }

/* main */
.main { margin-left: 22px; width: 1658px; flex: none; position: relative; }
.main::before { content: ""; position: absolute; right: -2px; top: 0; width: 2px; height: 48px; background: #0090c6; }
h1 { margin: 0; height: 54px; line-height: 50px; font-size: 58px; font-weight: 400; color: #0a86b8; }
.desc { margin: 28px 0 0; height: 40px; line-height: 40px; font-size: 27px; color: #333; }
.actions { display: flex; gap: 32px; margin: 4px 0 0 7px; height: 40px; align-items: center; }
.act { display: flex; align-items: center; gap: 11px; font-size: 27px; color: #3a8fb3; }
.act-ic { width: 32px; height: 32px; flex: none; filter: blur(0.5px); }

.toolbar { display: flex; justify-content: space-between; margin-top: 26px; height: 55px; }
.pager { display: flex; gap: 9px; height: 44px; align-items: stretch; padding-left: 1px; }
.pg { display: flex; align-items: center; justify-content: center; border: 2px solid #cbe3a6; border-radius: 9px; font-size: 28px; color: #0e7fab; background: #fff; }
.pg-wide { width: 68px; letter-spacing: 3px; }
.pg-mid { width: 49px; }
.pg-num { width: 44px; }
.count { line-height: 44px; font-size: 27.5px; color: #333; white-space: nowrap; }
.pager-bottom { margin-top: 5.5px; }

.search { display: flex; align-items: center; gap: 12px; width: 619px; height: 43px; margin: 3px 5px 0 0; padding-left: 10px; border: 2px solid #d0d0d0; border-top-color: #8a8a8a; color: #666; font-size: 30px; }
.search-ic { width: 31px; height: 30px; flex: none; filter: blur(0.5px); }

/* table */
.grid { width: 1658px; border-collapse: collapse; table-layout: fixed; }
.c1 { width: 74.5px; } .c2 { width: 93.5px; } .c3 { width: 459px; } .c4 { width: 449px; }
.c5 { width: 278px; } .c6 { width: 122px; } .c7 { width: 182px; }
.grid th { height: 59px; padding: 0 0 1px; text-align: left; background: #c6de97; border-bottom: 2px solid #0a7ba6; font-size: 27px; font-weight: 700; color: #0a6f9a; }
.grid td { height: 58.5px; padding: 0 0 1px; font-size: 25.2px; color: #333; white-space: nowrap; }
.grid td a { color: #0e7fab; }
.grid th.srs-head { font-size: 28px; }
.grid td.srs { font-size: 26.2px; }
.grid th:first-child, .grid td:first-child { padding-left: 11px; }
.odd td { background: #e1eeca; }
.hl td { background: #f3f7ea; }
.cb { display: block; width: 29px; height: 29px; border: 2px solid #767676; border-radius: 5px; background: #fff; }
.ft { display: block; width: 32px; height: 32px; margin-left: 1px; filter: blur(0.5px); }
.ok { display: block; width: 33px; height: 28px; margin: -2px 0 0 1.5px; filter: blur(0.4px); }
```
